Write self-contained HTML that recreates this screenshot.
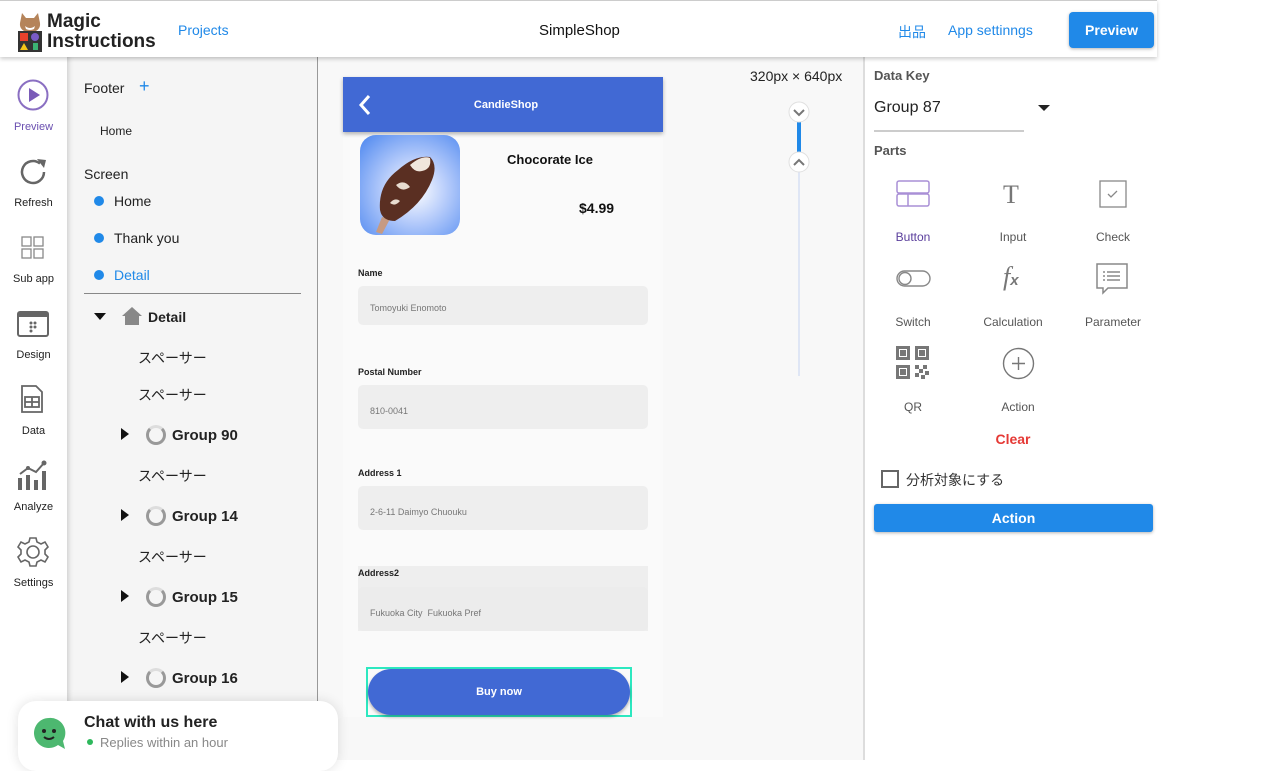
<!DOCTYPE html>
<html><head><meta charset="utf-8"><style>
*{box-sizing:border-box;margin:0;padding:0}
body{width:1270px;height:760px;overflow:hidden;background:#fff;font-family:"Liberation Sans","Noto Sans CJK JP",sans-serif;position:relative;color:#222}
.a{position:absolute}
.top{left:0;top:0;width:1157px;height:57px;background:#fff;border-top:1px solid #ccc;box-shadow:0 2px 4px rgba(0,0,0,.2);z-index:5}
.blue{color:#2089e8}
.nav{left:0;top:57px;width:67px;height:703px;background:#fff}
.nl{font-size:11px;width:67px;text-align:center;left:0}
.tree{left:67px;top:57px;width:251px;height:703px;background:#f5f5f5;border-right:1px solid #999;box-shadow:inset 4px 0 6px -3px rgba(0,0,0,.2)}
.center{left:318px;top:57px;width:545px;height:703px;background:#f8f8f8}
.right{left:863px;top:57px;width:294px;height:703px;background:#fff;border-left:2px solid #ddd}
.dot{width:10px;height:10px;border-radius:50%;background:#2089e8}
.sp{font-size:14px;left:138px}
.grp{font-size:15px;font-weight:bold;left:172px;color:#222}
.tri{width:0;height:0;border-top:6px solid transparent;border-bottom:6px solid transparent;border-left:8px solid #111;left:121px}
.ring{left:146px;width:20px;height:20px;border-radius:50%;border:3px solid #999;border-top-color:#ddd}
.lbl{font-size:9px;font-weight:bold;left:358px;color:#222}
.inp{left:358px;width:290px;background:#eee;border-radius:5px;font-size:9px;color:#777;padding-left:12px}
.pl{font-size:12px;color:#555;text-align:center;width:100px}
</style></head><body>
<div class="a top">
  <svg class="a" style="left:17px;top:8px" width="26" height="44" viewBox="0 0 26 44">
    <path d="M3 14 L5 4 L9 9 L17 9 L21 4 L23 14 Q24 22 13 24 Q2 22 3 14Z" fill="#b5845a"/>
    <path d="M8 17 Q13 21 18 17 L17 20 Q13 22 9 20Z" fill="#fff"/>
    <rect x="1" y="22" width="24" height="21" fill="#333"/>
    <rect x="3" y="24" width="8" height="8" fill="#e8412c"/>
    <circle cx="18" cy="28" r="4" fill="#7a5bc4"/>
    <path d="M3 41 L7 34 L11 41Z" fill="#f5c518"/>
    <rect x="16" y="34" width="5" height="7" fill="#3bb273"/>
  </svg>
  <div class="a" style="left:47px;top:11px;font-size:19px;font-weight:bold;line-height:20px;color:#222">Magic<br>Instructions</div>
  <div class="a blue" style="left:178px;top:21px;font-size:14px">Projects</div>
  <div class="a" style="left:539px;top:21px;font-size:15px;color:#111">SimpleShop</div>
  <div class="a blue" style="left:898px;top:21px;font-size:14px">出品</div>
  <div class="a blue" style="left:948px;top:21px;font-size:14px">App settinngs</div>
  <div class="a" style="left:1069px;top:11px;width:85px;height:36px;background:#2089e8;border-radius:4px;color:#fff;font-weight:bold;font-size:14px;text-align:center;line-height:36px;box-shadow:0 1px 3px rgba(0,0,0,.3)">Preview</div>
</div>

<div class="a nav">
  <svg class="a" style="left:17px;top:22px" width="32" height="32"><circle cx="16" cy="16" r="14.5" fill="none" stroke="#8a6fc2" stroke-width="2"/><path d="M12 9 L23 16 L12 23Z" fill="#7a5bb8"/></svg>
  <div class="a nl" style="top:64px;color:#6a4fb0">Preview</div>
  <svg class="a" style="left:17px;top:99px" width="32" height="32"><path d="M27 16 A11 11 0 1 1 23 7.5" fill="none" stroke="#666" stroke-width="2.5"/><path d="M20 3 L29 4 L27 12Z" fill="#666"/></svg>
  <div class="a nl" style="top:140px">Refresh</div>
  <svg class="a" style="left:21px;top:179px" width="24" height="24" fill="none" stroke="#888" stroke-width="1.3"><rect x="1" y="1" width="9" height="9"/><rect x="13" y="1" width="9" height="9"/><rect x="1" y="13" width="9" height="9"/><rect x="13" y="13" width="9" height="9"/></svg>
  <div class="a nl" style="top:216px">Sub app</div>
  <svg class="a" style="left:17px;top:254px" width="32" height="26"><rect x="1" y="1" width="30" height="24" rx="2" fill="none" stroke="#666" stroke-width="2"/><rect x="1" y="1" width="30" height="5" fill="#666"/><circle cx="14" cy="12" r="1.5" fill="#666"/><circle cx="18" cy="12" r="1.5" fill="#666"/><circle cx="14" cy="16" r="1.5" fill="#666"/><circle cx="18" cy="16" r="1.5" fill="#666"/><circle cx="14" cy="20" r="1.5" fill="#666"/></svg>
  <div class="a nl" style="top:292px">Design</div>
  <svg class="a" style="left:20px;top:327px" width="24" height="30" fill="none" stroke="#666" stroke-width="1.8"><path d="M2 2 H16 L22 8 V28 H2Z"/><rect x="5" y="13" width="14" height="10"/><path d="M5 18 H19 M12 13 V23"/></svg>
  <div class="a nl" style="top:368px">Data</div>
  <svg class="a" style="left:17px;top:402px" width="32" height="32" fill="#666"><rect x="1" y="19" width="4" height="12"/><rect x="9" y="16" width="4" height="15"/><rect x="17" y="21" width="4" height="10"/><rect x="25" y="12" width="4" height="19"/><path d="M3 15 L11 9 L19 13 L27 4" stroke="#666" stroke-width="2" fill="none"/><circle cx="27" cy="4" r="2.5"/><circle cx="11" cy="9" r="2"/></svg>
  <div class="a nl" style="top:444px">Analyze</div>
  <svg class="a" style="left:17px;top:479px" width="32" height="32" viewBox="0 0 32 32" fill="none" stroke="#666" stroke-width="1.6"><path d="M13 2 H19 L20 6 L24 8 L28 6 L31 11 L28 14 V18 L31 21 L28 26 L24 24 L20 26 L19 30 H13 L12 26 L8 24 L4 26 L1 21 L4 18 V14 L1 11 L4 6 L8 8 L12 6Z"/><circle cx="16" cy="16" r="6"/></svg>
  <div class="a nl" style="top:520px">Settings</div>
</div>

<div class="a tree">
  <div class="a" style="left:17px;top:23px;font-size:14px">Footer</div>
  <div class="a blue" style="left:72px;top:19px;font-size:18px">+</div>
  <div class="a" style="left:33px;top:67px;font-size:12px">Home</div>
  <div class="a" style="left:17px;top:109px;font-size:14px">Screen</div>
  <div class="a dot" style="left:27px;top:139px"></div><div class="a" style="left:47px;top:136px;font-size:14px">Home</div>
  <div class="a dot" style="left:27px;top:176px"></div><div class="a" style="left:47px;top:173px;font-size:14px">Thank you</div>
  <div class="a dot" style="left:27px;top:213px"></div><div class="a blue" style="left:47px;top:210px;font-size:14px">Detail</div>
  <div class="a" style="left:17px;top:236px;width:217px;height:1px;background:#888"></div>
</div>
<div class="a" style="left:94px;top:313px;border-left:6px solid transparent;border-right:6px solid transparent;border-top:7px solid #111"></div>
<svg class="a" style="left:122px;top:307px" width="20" height="18" fill="#888"><path d="M10 0 L20 9 H17 V18 H3 V9 H0Z"/></svg>
<div class="a" style="left:148px;top:309px;font-size:14px;font-weight:bold">Detail</div>
<div class="a sp" style="top:348px">スペーサー</div>
<div class="a sp" style="top:385px">スペーサー</div>
<div class="a tri" style="top:428px"></div><div class="a ring" style="top:425px"></div><div class="a grp" style="top:427px">Group 90</div>
<div class="a sp" style="top:466px">スペーサー</div>
<div class="a tri" style="top:509px"></div><div class="a ring" style="top:506px"></div><div class="a grp" style="top:508px">Group 14</div>
<div class="a sp" style="top:547px">スペーサー</div>
<div class="a tri" style="top:590px"></div><div class="a ring" style="top:587px"></div><div class="a grp" style="top:589px">Group 15</div>
<div class="a sp" style="top:628px">スペーサー</div>
<div class="a tri" style="top:671px"></div><div class="a ring" style="top:668px"></div><div class="a grp" style="top:670px">Group 16</div>

<div class="a center"></div>
<div class="a" style="left:343px;top:132px;width:320px;height:585px;background:#fafafa"></div>
<div class="a" style="left:343px;top:77px;width:320px;height:55px;background:#4169d4;box-shadow:0 2px 4px rgba(0,0,0,.3)"></div>
<svg class="a" style="left:357px;top:94px" width="16" height="22"><path d="M12 2 L4 11 L12 20" fill="none" stroke="#fff" stroke-width="3"/></svg>
<div class="a" style="left:343px;top:99px;width:326px;text-align:center;color:#fff;font-size:11px;font-weight:bold">CandieShop</div>
<div class="a" style="left:360px;top:135px;width:100px;height:100px;border-radius:16px;background:radial-gradient(circle at 55% 55%,#fff 0%,#b8cdfb 40%,#4a85ef 100%);overflow:hidden">
  <svg width="100" height="100"><path d="M22 82 L16 97 L22 99 L30 84Z" fill="#c69a82"/><path d="M20 75 Q18 50 38 35 Q55 20 70 22 Q78 30 72 45 Q62 70 35 86 Q22 86 20 75Z" fill="#5a2f22"/><path d="M50 30 Q62 20 70 23 Q72 34 62 36 Q55 38 50 30Z" fill="#f0e6dc"/><path d="M36 50 Q44 44 50 52 Q42 58 36 50Z" fill="#e8dcd0"/><path d="M30 68 Q35 62 40 66 Q35 72 30 68Z" fill="#e8dcd0"/></svg>
</div>
<div class="a" style="left:507px;top:152px;font-size:13px;font-weight:bold;color:#111">Chocorate Ice</div>
<div class="a" style="left:579px;top:200px;font-size:14px;font-weight:bold;color:#111">$4.99</div>
<div class="a lbl" style="top:268px">Name</div>
<div class="a inp" style="top:286px;height:39px;line-height:44px">Tomoyuki Enomoto</div>
<div class="a lbl" style="top:367px">Postal Number</div>
<div class="a inp" style="top:385px;height:44px;line-height:52px">810-0041</div>
<div class="a lbl" style="top:468px">Address 1</div>
<div class="a inp" style="top:486px;height:44px;line-height:52px">2-6-11 Daimyo Chuouku</div>
<div class="a" style="left:358px;top:566px;width:290px;height:65px;background:#eee"></div>
<div class="a lbl" style="top:568px">Address2</div>
<div class="a inp" style="top:587px;height:44px;line-height:52px;background:#ececec">Fukuoka City&nbsp; Fukuoka Pref</div>
<div class="a" style="left:366px;top:667px;width:266px;height:50px;border:2px solid #2de8c0"></div>
<div class="a" style="left:368px;top:669px;width:262px;height:46px;border-radius:23px;background:#4169d4;color:#fff;font-size:11px;font-weight:bold;text-align:center;line-height:46px;box-shadow:0 2px 3px rgba(0,0,0,.3)">Buy now</div>

<div class="a" style="left:750px;top:68px;font-size:14px;color:#222">320px × 640px</div>
<div class="a" style="left:798px;top:112px;width:2px;height:264px;background:#dfe6f5"></div>
<div class="a" style="left:797px;top:118px;width:4px;height:36px;background:#2089e8"></div>
<svg class="a" style="left:788px;top:101px" width="22" height="22"><circle cx="11" cy="11" r="10" fill="#fff" stroke="#e0e0e0"/><path d="M6 9 L11 14 L16 9" fill="none" stroke="#777" stroke-width="2"/></svg>
<svg class="a" style="left:788px;top:151px" width="22" height="22"><circle cx="11" cy="11" r="10" fill="#fff" stroke="#e0e0e0"/><path d="M6 14 L11 9 L16 14" fill="none" stroke="#777" stroke-width="2"/></svg>

<div class="a right"></div>
<div class="a" style="left:874px;top:68px;font-size:13px;font-weight:bold;color:#555">Data Key</div>
<div class="a" style="left:874px;top:99px;font-size:16px;color:#222">Group 87</div>
<div class="a" style="left:1038px;top:105px;border-left:6px solid transparent;border-right:6px solid transparent;border-top:6px solid #222"></div>
<div class="a" style="left:874px;top:130px;width:150px;height:2px;background:#ccc"></div>
<div class="a" style="left:874px;top:143px;font-size:13px;font-weight:bold;color:#555">Parts</div>
<svg class="a" style="left:896px;top:180px" width="35" height="28" fill="none" stroke="#a98fd6" stroke-width="1.5"><rect x="1" y="1" width="32" height="12" rx="2"/><rect x="1" y="14" width="32" height="12" rx="2"/><path d="M12 14 V26"/></svg>
<div class="a pl" style="left:863px;top:230px;color:#5a3e9c">Button</div>
<div class="a" style="left:1003px;top:180px;font-size:26px;color:#777;font-family:'Liberation Serif',serif">T</div>
<div class="a pl" style="left:963px;top:230px">Input</div>
<svg class="a" style="left:1099px;top:180px" width="28" height="28" fill="none" stroke="#888" stroke-width="1.3"><rect x="1" y="1" width="26" height="26"/><path d="M9 14 L12 17 L18 11"/></svg>
<div class="a pl" style="left:1063px;top:230px">Check</div>
<svg class="a" style="left:896px;top:270px" width="36" height="18" fill="none" stroke="#888" stroke-width="1.4"><rect x="1" y="1" width="33" height="15" rx="7.5"/><circle cx="9" cy="8.5" r="6"/></svg>
<div class="a pl" style="left:863px;top:315px">Switch</div>
<div class="a" style="left:1003px;top:262px;font-size:26px;color:#777;font-style:italic;font-family:'Liberation Serif',serif">f<span style="font-size:15px;font-family:'Liberation Sans';font-weight:bold">x</span></div>
<div class="a pl" style="left:963px;top:315px">Calculation</div>
<svg class="a" style="left:1096px;top:263px" width="33" height="32" fill="none" stroke="#888" stroke-width="1.5"><path d="M1 1 H31 V25 H12 L7 30 V25 H1Z"/><path d="M11 9 H24 M11 13 H24 M11 17 H24 M7 9 H9 M7 13 H9 M7 17 H9"/></svg>
<div class="a pl" style="left:1063px;top:315px">Parameter</div>
<svg class="a" style="left:896px;top:346px" width="35" height="35" fill="#777"><path d="M0 0 H14 V14 H0Z M3 3 V11 H11 V3Z M4 4 H10 V10 H4Z" fill-rule="evenodd"/><path d="M19 0 H33 V14 H19Z M22 3 V11 H30 V3Z M23 4 H29 V10 H23Z" fill-rule="evenodd"/><path d="M0 19 H14 V33 H0Z M3 22 V30 H11 V22Z M4 23 H10 V29 H4Z" fill-rule="evenodd"/><rect x="19" y="19" width="4" height="4"/><rect x="27" y="19" width="4" height="4"/><rect x="23" y="23" width="4" height="4"/><rect x="19" y="27" width="4" height="4"/><rect x="29" y="25" width="4" height="4"/><rect x="25" y="29" width="4" height="4"/></svg>
<div class="a pl" style="left:863px;top:400px">QR</div>
<svg class="a" style="left:1002px;top:347px" width="33" height="33" fill="none" stroke="#777" stroke-width="1.4"><circle cx="16.5" cy="16.5" r="15"/><path d="M16.5 10 V23 M10 16.5 H23"/></svg>
<div class="a pl" style="left:968px;top:400px">Action</div>
<div class="a" style="left:963px;top:431px;width:100px;text-align:center;color:#e53935;font-size:14px;font-weight:bold">Clear</div>
<div class="a" style="left:881px;top:470px;width:18px;height:18px;border:2px solid #666"></div>
<div class="a" style="left:906px;top:470px;font-size:14px;color:#333">分析対象にする</div>
<div class="a" style="left:874px;top:504px;width:279px;height:28px;border-radius:3px;background:#2089e8;color:#fff;font-size:14px;font-weight:bold;text-align:center;line-height:28px;box-shadow:0 1px 3px rgba(0,0,0,.3)">Action</div>

<div class="a" style="left:18px;top:701px;width:320px;height:70px;background:#fff;border-radius:18px;box-shadow:0 0 12px rgba(0,0,0,.12)"></div>
<svg class="a" style="left:32px;top:716px" width="36" height="36"><path d="M17 2 A15 15 0 1 0 26 29 L33 33 L31 25 A15 15 0 0 0 17 2Z" fill="#4db870"/><circle cx="12" cy="15" r="2" fill="#222"/><circle cx="22" cy="15" r="2" fill="#222"/><path d="M12 21 Q17 25 22 21" stroke="#222" stroke-width="2" fill="none"/></svg>
<div class="a" style="left:84px;top:714px;font-size:16px;font-weight:bold;color:#222">Chat with us here</div>
<div class="a" style="left:87px;top:739px;width:6px;height:6px;border-radius:50%;background:#2eb85c"></div>
<div class="a" style="left:100px;top:735px;font-size:13px;color:#888">Replies within an hour</div>
</body></html>
